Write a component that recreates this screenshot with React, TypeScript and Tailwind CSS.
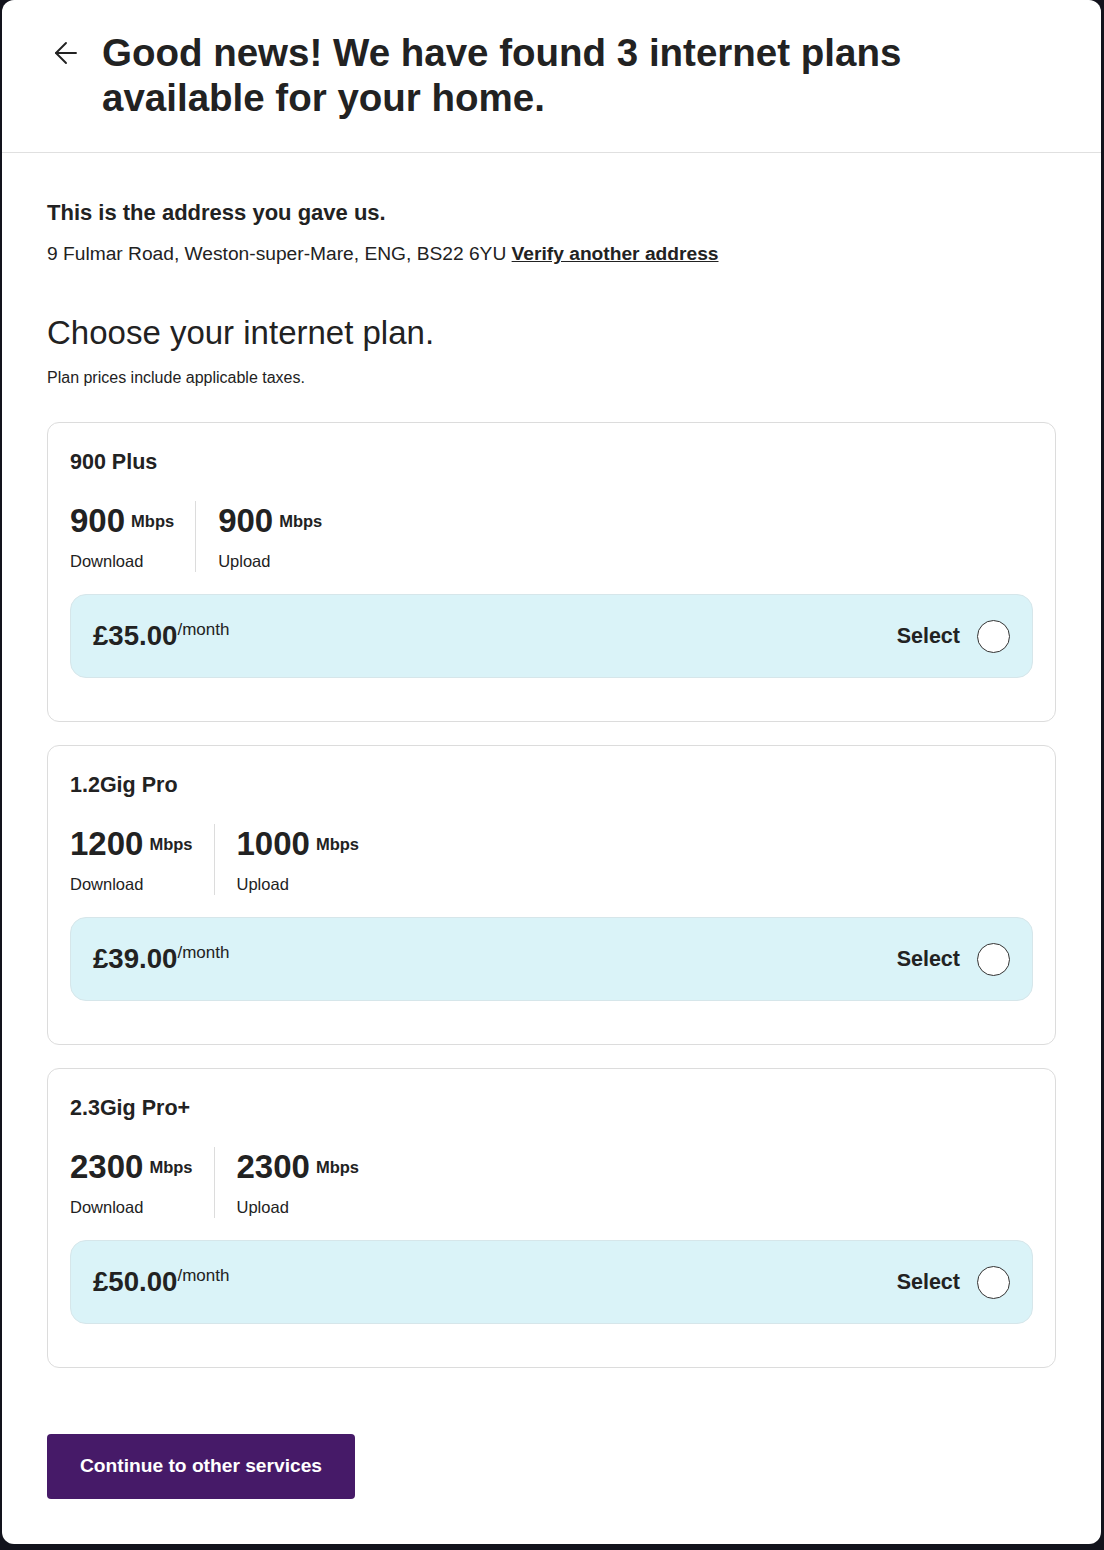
interface Plan {
  name: string
  download: string
  upload: string
  price: string
}

const PLANS: Plan[] = [
  { name: '900 Plus', download: '900', upload: '900', price: '£35.00' },
  { name: '1.2Gig Pro', download: '1200', upload: '1000', price: '£39.00' },
  { name: '2.3Gig Pro+', download: '2300', upload: '2300', price: '£50.00' },
]

function BackArrow() {
  return (
    <svg width="24" height="24" viewBox="0 0 24 24" fill="none" stroke="#222" strokeWidth="1.9" strokeLinecap="round" strokeLinejoin="round">
      <path d="M22 12H2" />
      <path d="M12 2 2 12l10 10" />
    </svg>
  )
}

function Speed({ value, label }: { value: string, label: string }) {
  return (
    <div className="flex flex-col">
      <div className="flex items-center gap-[6px]">
        <span className="text-[33px] font-bold leading-[40px]">{value}</span>
        <span className="text-[16.5px] font-bold leading-[22px]">Mbps</span>
      </div>
      <span className="mt-[9px] text-[16.5px] leading-[22px]">{label}</span>
    </div>
  )
}

function PlanCard({ plan }: { plan: Plan }) {
  return (
    <div className="rounded-[12px] border border-[#dcdcdc] px-[22px] pb-[43px] pt-[25px]">
      <h3 className="text-[21.5px] font-bold leading-[28px]">{plan.name}</h3>
      <div className="mt-[25px] flex">
        <div className="border-r border-[#dcdcdc] pr-[21px]">
          <Speed value={plan.download} label="Download" />
        </div>
        <div className="pl-[22px]">
          <Speed value={plan.upload} label="Upload" />
        </div>
      </div>
      <div className="mt-[22px] flex h-[84px] items-center justify-between rounded-[16px] border border-[#d6e6ea] bg-[#daf3f8] px-[22px]">
        <div className="flex items-start">
          <span className="text-[27.6px] font-bold leading-[30px]">{plan.price}</span>
          <span className="-mt-[1px] text-[17px] leading-[20px]">/month</span>
        </div>
        <label className="flex items-center gap-[17px]">
          <span className="text-[21.5px] font-bold">Select</span>
          <span className="block size-[33px] rounded-full border border-[#333] bg-white" />
        </label>
      </div>
    </div>
  )
}

export default function App() {
  return (
    <div className="min-h-screen bg-[#12131c] pb-[4px] pl-[2px] pr-[3px] text-[#222] [font-family:'Liberation_Sans',Arial,sans-serif]">
      <div className="rounded-[12px] bg-white">
        <header className="flex items-start border-b border-[#e0e0e0] pb-[32px] pl-[52px] pt-[30px]">
          <div className="mt-[11px]">
            <BackArrow />
          </div>
          <h1 className="ml-[24px] max-w-[830px] text-[38.5px] font-bold leading-[45px]">
            Good news! We have found 3 internet plans available for your home.
          </h1>
        </header>

        <main className="px-[45px] pb-[45px] pt-[46px]">
          <h2 className="text-[22px] font-bold leading-[28px]">This is the address you gave us.</h2>
          <p className="mt-[14px] text-[19.2px] leading-[26px]">
            9 Fulmar Road, Weston-super-Mare, ENG, BS22 6YU
            {' '}
            <a href="#" className="font-bold underline">Verify another address</a>
          </p>

          <h2 className="mt-[46px] text-[33px] leading-[40px]">Choose your internet plan.</h2>
          <p className="mt-[14px] text-[16px] leading-[22px]">Plan prices include applicable taxes.</p>

          <div className="mt-[33px] flex flex-col gap-[23px]">
            {PLANS.map(plan => (
              <PlanCard key={plan.name} plan={plan} />
            ))}
          </div>

          <button
            type="button"
            className="mt-[66px] h-[65px] rounded-[4px] bg-[#461a68] px-[33px] text-[19.2px] font-bold text-white"
          >
            Continue to other services
          </button>
        </main>
      </div>
    </div>
  )
}
